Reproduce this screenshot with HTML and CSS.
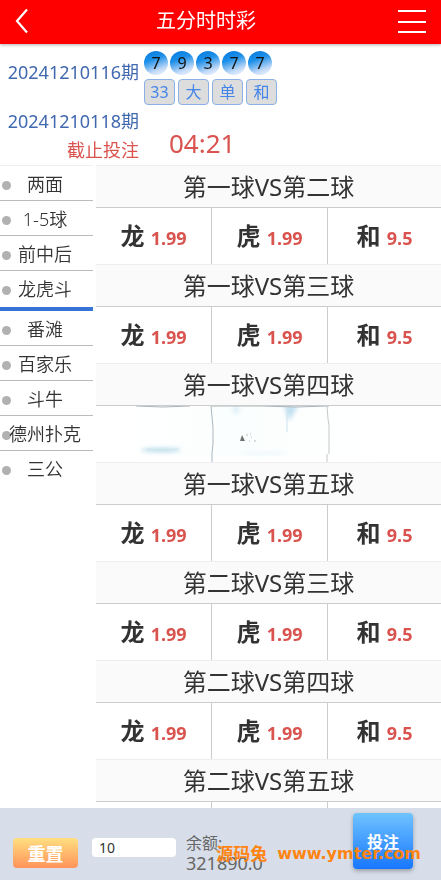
FILE: index.html
```html
<!DOCTYPE html>
<html lang="zh-CN">
<head>
    <meta charset="UTF-8">
    <meta name="viewport" content="width=device-width, initial-scale=1.0">
    <title>五分时时彩</title>
    <link rel="stylesheet" href="styles.css">
</head>
<body>
    <header class="top-bar">
        <a href="#" class="back" aria-label="返回">
            <svg width="14" height="26" viewBox="0 0 14 26"><path d="M12 1.500L2 13l10 11.500" fill="none" stroke="#fff" stroke-width="2.200"/></svg>
        </a>
        <h1>五分时时彩</h1>
        <button type="button" class="menu" aria-label="菜单">
            <svg width="28" height="24" viewBox="0 0 28 24"><path d="M0 2h28M0 13h28M0 23h28" stroke="#fff" stroke-width="2"/></svg>
        </button>
    </header>

    <section class="draw">
        <div class="issue last">20241210116期</div>
        <div class="result">
            <div class="balls">
                <span>7</span><span>9</span><span>3</span><span>7</span><span>7</span>
            </div>
            <div class="tags">
                <span>33</span><span>大</span><span>单</span><span>和</span>
            </div>
        </div>
        <div class="issue">20241210118期<br><span class="closing">截止投注</span></div>
        <div class="timer">04:21</div>
    </section>

    <main class="content">
        <nav class="side">
            <a href="#">两面</a>
            <a href="#">1-5球</a>
            <a href="#">前中后</a>
            <a href="#" class="active">龙虎斗</a>
            <a href="#">番滩</a>
            <a href="#">百家乐</a>
            <a href="#">斗牛</a>
            <a href="#">德州扑克</a>
            <a href="#">三公</a>
        </nav>

        <div class="bets">
            <h2>第一球VS第二球</h2>
            <div class="odds">
                <button type="button">龙 <b>1.99</b></button>
                <button type="button">虎 <b>1.99</b></button>
                <button type="button">和 <b>9.5</b></button>
            </div>
            <h2>第一球VS第三球</h2>
            <div class="odds">
                <button type="button">龙 <b>1.99</b></button>
                <button type="button">虎 <b>1.99</b></button>
                <button type="button">和 <b>9.5</b></button>
            </div>
            <h2>第一球VS第四球</h2>
            <div class="sketch">
                <svg viewBox="0 0 345 56" preserveAspectRatio="none" aria-hidden="true">
                    <defs>
                        <filter id="soft" x="-20%" y="-80%" width="140%" height="260%"><feGaussianBlur stdDeviation="2"/></filter>
                        <linearGradient id="wash" x1="0" x2="1">
                            <stop offset="0" stop-color="#fff"/>
                            <stop offset="0.4" stop-color="#fbfefe"/>
                            <stop offset="1" stop-color="#fff"/>
                        </linearGradient>
                    </defs>
                    <rect x="30" y="1" width="260" height="50" fill="url(#wash)"/>
                    <g filter="url(#soft)">
                        <ellipse cx="65" cy="44" rx="20" ry="2" fill="#b5d9e9"/>
                        <ellipse cx="140" cy="4" rx="4" ry="4" fill="#dff1f9"/>
                        <path d="M188 0h14l-9 15z" fill="#c0dff0"/>
                        <ellipse cx="168" cy="47" rx="24" ry="1" fill="#e4f4f9"/>
                    </g>
                    <path d="M50 43l16 1 16-1" fill="none" stroke="#cfe5ed"/>
                    <path d="M40 0l27 1 27-1M115 0h50l34 1 34-1" fill="none" stroke="#aab3ba"/>
                    <path d="M115 0l1 11 1 10v17l-1 9v9" fill="none" stroke="#a9b7c0"/>
                    <path d="M231 0l1 13 1 6v29M231 48v8" fill="none" stroke="#c7c7ca"/>
                    <path d="M191 2v24" stroke="#cde2ee" stroke-width="1"/>
                    <path d="M144 35l2-6 3 6z" fill="#6b746d"/>
                    <path d="M150 29h2M154 28h1M155 31h1M153 35h1M158 35h2" stroke="#bbb"/>
                </svg>
            </div>
            <h2>第一球VS第五球</h2>
            <div class="odds">
                <button type="button">龙 <b>1.99</b></button>
                <button type="button">虎 <b>1.99</b></button>
                <button type="button">和 <b>9.5</b></button>
            </div>
            <h2>第二球VS第三球</h2>
            <div class="odds">
                <button type="button">龙 <b>1.99</b></button>
                <button type="button">虎 <b>1.99</b></button>
                <button type="button">和 <b>9.5</b></button>
            </div>
            <h2>第二球VS第四球</h2>
            <div class="odds">
                <button type="button">龙 <b>1.99</b></button>
                <button type="button">虎 <b>1.99</b></button>
                <button type="button">和 <b>9.5</b></button>
            </div>
            <h2>第二球VS第五球</h2>
            <div class="odds">
                <button type="button"></button>
                <button type="button"></button>
                <button type="button"></button>
            </div>
        </div>
    </main>

    <footer class="bet-bar">
        <button type="button" class="reset">重置</button>
        <input type="text" class="amount" value="10" aria-label="投注金额">
        <div class="balance"><span>余额:</span><br>321890.0</div>
        <button type="button" class="submit">投注</button>
        <div class="site-mark"><span>源码兔</span><span class="domain">www.ymter.com</span></div>
    </footer>
</body>
</html>
```

FILE: styles.css
```css
* {
    box-sizing: border-box;
}

body {
    display: flex;
    flex-direction: column;
    height: 100vh;
    margin: 0;
    background-color: #fff;
    color: #333;
    font-family: "Noto Sans", "Noto Sans CJK SC", sans-serif;
    font-size: 18px;
}

a {
    color: inherit;
    text-decoration: none;
}

button {
    padding: 0;
    border: none;
    background: none;
    color: inherit;
    font-family: inherit;
    cursor: pointer;
}

.top-bar {
    display: flex;
    align-items: center;
    flex-shrink: 0;
    height: 44px;
    padding-bottom: 2px;
    background-color: #f00;
    color: #fff;
    box-shadow: 0 1px 3px rgba(0, 0, 0, 0.3);
}

.top-bar svg {
    display: block;
}

.back {
    padding-left: 15px;
}

.top-bar h1 {
    flex: 1;
    margin: 0;
    font-size: 20px;
    font-weight: 400;
    line-height: 28px;
    text-align: center;
}

.menu {
    padding: 0 15px;
}

/* last result and countdown */
.draw {
    display: grid;
    grid-template-columns: 139px 1fr;
    column-gap: 5px;
    flex-shrink: 0;
    padding-top: 7px;
}

.issue {
    color: #4169b0;
    line-height: 29px;
    text-align: right;
    white-space: nowrap;
}

.issue.last {
    line-height: 42px;
}

.result {
    height: 56px;
}

.balls {
    display: flex;
    gap: 2px;
}

.balls span {
    width: 24px;
    height: 24px;
    border-radius: 50%;
    background: linear-gradient(160deg, #0a7fe0 10%, #1c8fe8 35%, #c5dbf8 75%, #f4f8ff);
    color: #111;
    font-size: 16px;
    line-height: 24px;
    text-align: center;
}

.tags {
    display: flex;
    gap: 3px;
    margin-top: 4px;
}

.tags span {
    width: 31px;
    height: 26px;
    border: 1px solid #8ab0e6;
    border-radius: 4px;
    background-color: #ddd;
    color: #4385e8;
    font-size: 16px;
    line-height: 24px;
    text-align: center;
}

.closing,
.timer {
    color: #d9534f;
}

.timer {
    padding: 14px 0 0 25px;
    font-size: 26px;
    line-height: 44px;
}

.content {
    display: flex;
    flex: 1;
    gap: 3px;
    min-height: 0;
    overflow-y: auto;
    scrollbar-width: none;
}

.side {
    width: 93px;
    flex-shrink: 0;
    border-top: 1px solid #eee;
}

.side a {
    display: block;
    position: relative;
    height: 35px;
    padding-right: 3px;
    border-bottom: 1px solid #bbb;
    font-weight: 350;
    line-height: 36px;
    text-align: center;
    white-space: nowrap;
}

.side a::before {
    content: "";
    position: absolute;
    z-index: -1;
    top: 15px;
    left: 2px;
    width: 9px;
    height: 9px;
    border-radius: 50%;
    background-color: #b1b1b1;
}

.side a.active {
    height: 40px;
    border-bottom: 4px solid #3573d6;
}

.side a:last-child {
    border-bottom: none;
}

.bets {
    flex: 1;
}

.bets h2 {
    height: 43px;
    margin: 0;
    border-top: 1px solid #eee;
    border-bottom: 1px solid #ccc;
    background-color: #fafafa;
    font-size: 24px;
    font-weight: 400;
    line-height: 42px;
    text-align: center;
}

.odds {
    display: grid;
    grid-template-columns: 116fr 116fr 113fr;
    height: 56px;
}

.odds button {
    padding-bottom: 4px;
    border-right: 1px solid #ccc;
    font-size: 24px;
    font-weight: 700;
}

.odds button:last-child {
    border-right: none;
}

.odds b {
    color: #d9534f;
    font-size: 18px;
    font-weight: 700;
}

.sketch svg {
    display: block;
    width: 100%;
    height: 56px;
}

.bet-bar {
    display: flex;
    position: relative;
    flex-shrink: 0;
    height: 72px;
    padding: 5px 28px 0 13px;
    background-color: #d7dee9;
}

.reset {
    width: 65px;
    height: 30px;
    margin-top: 25px;
    border-radius: 4px;
    background: linear-gradient(#ffdf80, #ff935a);
    color: #fff;
    font-size: 18px;
    font-weight: 700;
}

.amount {
    width: 84px;
    height: 19px;
    margin: 25px 10px 0 14px;
    padding: 0 7px;
    border: none;
    border-radius: 4px;
    background-color: #fff;
    color: #333;
    font-family: inherit;
    font-size: 14px;
}

.balance {
    margin-top: 19px;
    color: #666;
    line-height: 20px;
}

.balance span {
    font-size: 16px;
}

.submit {
    width: 60px;
    height: 56px;
    margin-left: auto;
    border-radius: 4px;
    background: linear-gradient(#6fc3ff, #1877ff);
    box-shadow: 0 2px 4px rgba(0, 0, 0, 0.3);
    color: #fff;
    font-size: 16px;
    font-weight: 700;
}

/* site name laid over the bar */
.site-mark {
    display: flex;
    position: absolute;
    right: 20px;
    bottom: 15px;
    gap: 10px;
    color: #ff8412;
    font-size: 17px;
    font-weight: 700;
    line-height: 22px;
    white-space: nowrap;
    pointer-events: none;
}

.domain {
    font-family: "DejaVu Sans", sans-serif;
    font-size: 16px;
}
```
